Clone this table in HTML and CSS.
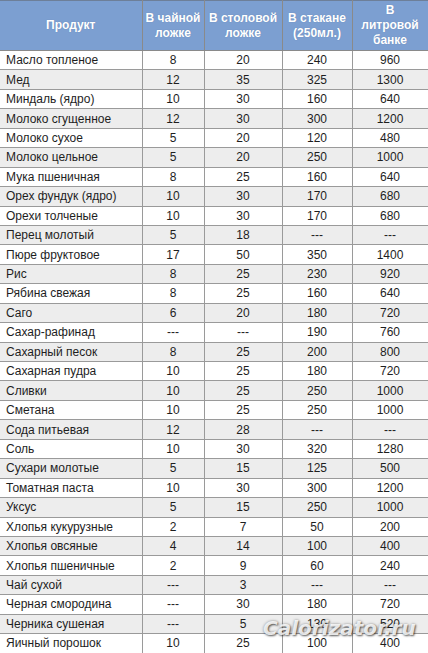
FILE: index.html
```html
<!DOCTYPE html>
<html lang="ru">
<head>
<meta charset="utf-8">
<title>Таблица мер и весов</title>
<link rel="stylesheet" href="styles.css">
</head>
<body>
<div class="wrap">
<table class="measures">
<colgroup>
<col class="c1"><col class="c2"><col class="c3"><col class="c4"><col class="c5">
</colgroup>
<thead>
<tr><th>Продукт</th><th>В чайной<br>ложке</th><th>В столовой<br>ложке</th><th>В стакане<br>(250мл.)</th><th>В<br>литровой<br>банке</th></tr>
</thead>
<tbody>
<tr><td>Масло топленое</td><td>8</td><td>20</td><td>240</td><td>960</td></tr>
<tr><td>Мед</td><td>12</td><td>35</td><td>325</td><td>1300</td></tr>
<tr><td>Миндаль (ядро)</td><td>10</td><td>30</td><td>160</td><td>640</td></tr>
<tr><td>Молоко сгущенное</td><td>12</td><td>30</td><td>300</td><td>1200</td></tr>
<tr><td>Молоко сухое</td><td>5</td><td>20</td><td>120</td><td>480</td></tr>
<tr><td>Молоко цельное</td><td>5</td><td>20</td><td>250</td><td>1000</td></tr>
<tr><td>Мука пшеничная</td><td>8</td><td>25</td><td>160</td><td>640</td></tr>
<tr><td>Орех фундук (ядро)</td><td>10</td><td>30</td><td>170</td><td>680</td></tr>
<tr><td>Орехи толченые</td><td>10</td><td>30</td><td>170</td><td>680</td></tr>
<tr><td>Перец молотый</td><td>5</td><td>18</td><td>---</td><td>---</td></tr>
<tr><td>Пюре фруктовое</td><td>17</td><td>50</td><td>350</td><td>1400</td></tr>
<tr><td>Рис</td><td>8</td><td>25</td><td>230</td><td>920</td></tr>
<tr><td>Рябина свежая</td><td>8</td><td>25</td><td>160</td><td>640</td></tr>
<tr><td>Саго</td><td>6</td><td>20</td><td>180</td><td>720</td></tr>
<tr><td>Сахар-рафинад</td><td>---</td><td>---</td><td>190</td><td>760</td></tr>
<tr><td>Сахарный песок</td><td>8</td><td>25</td><td>200</td><td>800</td></tr>
<tr><td>Сахарная пудра</td><td>10</td><td>25</td><td>180</td><td>720</td></tr>
<tr><td>Сливки</td><td>10</td><td>25</td><td>250</td><td>1000</td></tr>
<tr><td>Сметана</td><td>10</td><td>25</td><td>250</td><td>1000</td></tr>
<tr><td>Сода питьевая</td><td>12</td><td>28</td><td>---</td><td>---</td></tr>
<tr><td>Соль</td><td>10</td><td>30</td><td>320</td><td>1280</td></tr>
<tr><td>Сухари молотые</td><td>5</td><td>15</td><td>125</td><td>500</td></tr>
<tr><td>Томатная паста</td><td>10</td><td>30</td><td>300</td><td>1200</td></tr>
<tr><td>Уксус</td><td>5</td><td>15</td><td>250</td><td>1000</td></tr>
<tr><td>Хлопья кукурузные</td><td>2</td><td>7</td><td>50</td><td>200</td></tr>
<tr><td>Хлопья овсяные</td><td>4</td><td>14</td><td>100</td><td>400</td></tr>
<tr><td>Хлопья пшеничные</td><td>2</td><td>9</td><td>60</td><td>240</td></tr>
<tr><td>Чай сухой</td><td>---</td><td>3</td><td>---</td><td>---</td></tr>
<tr><td>Черная смородина</td><td>---</td><td>30</td><td>180</td><td>720</td></tr>
<tr><td>Черника сушеная</td><td>---</td><td>5</td><td>130</td><td>520</td></tr>
<tr><td>Яичный порошок</td><td>10</td><td>25</td><td>100</td><td>400</td></tr>
</tbody>
</table>
<div class="watermark">Calorizator.ru</div>
</div>
</body>
</html>
```
FILE: styles.css
```css
html, body {
  margin: 0;
  padding: 0;
  background: #ffffff;
}
body {
  font-family: "Liberation Sans", Arial, sans-serif;
  color: #1e1e1e;
}
.wrap {
  position: relative;
  width: 428px;
  height: 653px;
  overflow: hidden;
}
.measures {
  width: 428px;
  border-collapse: collapse;
  table-layout: fixed;
  font-size: 12px;
}
.c1 { width: 142px; }
.c2 { width: 62px; }
.c3 { width: 78px; }
.c4 { width: 70px; }
.c5 { width: 76px; }
.measures th {
  background: #7c9fd1;
  color: #ffffff;
  font-weight: bold;
  font-size: 12px;
  line-height: 15px;
  height: 49px;
  padding: 0;
  text-align: center;
  vertical-align: middle;
  border: 1px solid #8a8a8a;
  border-top: 1px solid #6d7f99;
  border-left: none;
  text-shadow: 0 0 1px rgba(60, 80, 120, 0.35);
}
.measures td {
  height: 18.45px;
  padding: 0;
  line-height: 14px;
  text-align: center;
  border: 1px solid #9a9a9a;
  border-left: 1px solid #9a9a9a;
  white-space: nowrap;
}
.measures td:first-child {
  text-align: left;
  padding-left: 6px;
  border-left: none;
}
.measures tbody tr:nth-child(even) td {
  background: #ededed;
}
.watermark {
  position: absolute;
  left: 263px;
  top: 616px;
  font-family: "DejaVu Sans", sans-serif;
  font-weight: bold;
  font-style: italic;
  font-size: 20px;
  color: rgba(255, 255, 255, 0.85);
  text-shadow: 1px 1px 2px rgba(0, 0, 0, 0.55), 0 0 3px rgba(0, 0, 0, 0.35);
}
```
